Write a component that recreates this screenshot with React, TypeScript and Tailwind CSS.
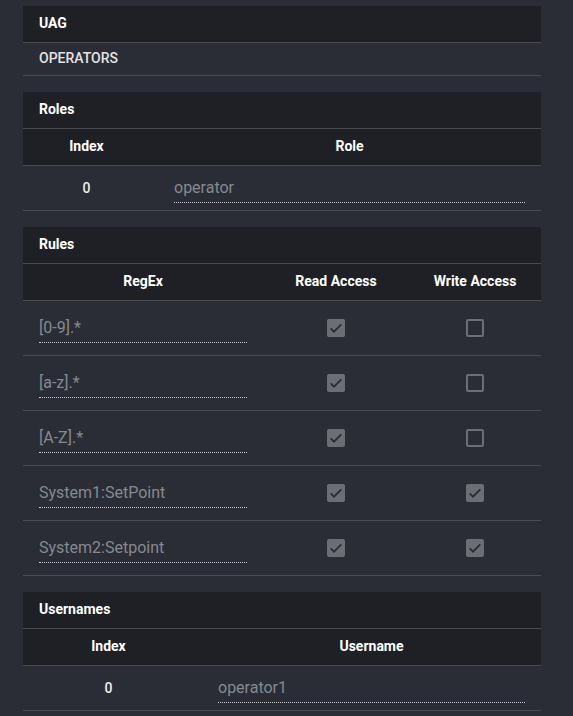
import React from "react";

const font = { fontFamily: "Roboto, 'Noto Sans', sans-serif" };

function Check({ checked }: { checked: boolean }) {
  if (checked) {
    return (
      <div className="w-[18px] h-[18px] rounded-[2px] bg-[#6b6e74] flex items-center justify-center">
        <svg width="16" height="16" viewBox="0 0 24 24">
          <path d="M4 12.5l5 5L20 6.5" fill="none" stroke="#2a2c33" strokeWidth="2.6" />
        </svg>
      </div>
    );
  }
  return <div className="w-[18px] h-[18px] rounded-[2px] border-2 border-[#6b6e74]" />;
}

function Field({ value }: { value: string }) {
  return (
    <div className="w-full h-[29px] border-b border-dotted border-[#c9cacc] text-[16px] leading-[23px] pt-[2px] text-[#86898f]">
      {value}
    </div>
  );
}

function Title({ children }: { children: React.ReactNode }) {
  return (
    <div className="h-[37px] bg-[#1e2025] border-b border-[#4a4b4f] flex items-center px-4 pb-[2px] text-[14px] font-bold text-white">
      {children}
    </div>
  );
}

const rules: [string, boolean, boolean][] = [
  ["[0-9].*", true, false],
  ["[a-z].*", true, false],
  ["[A-Z].*", true, false],
  ["System1:SetPoint", true, true],
  ["System2:Setpoint", true, true],
];

export default function App() {
  return (
    <div className="min-h-[716px] bg-[#2a2d35] pt-[6px]" style={font}>
      <div className="ml-[23px] w-[518px] flex flex-col">
        {/* UAG */}
        <div>
          <Title>UAG</Title>
          <div className="h-[33px] border-b border-[#4a4b4f] flex items-center px-4 pb-[2px] text-[14px] font-medium text-[#e3e3e3]">
            OPERATORS
          </div>
        </div>

        {/* Roles */}
        <div className="mt-4">
          <Title>Roles</Title>
          <div className="grid grid-cols-[127px_1fr] h-[37px] bg-[#1e2025] border-b border-[#4a4b4f] items-center pb-[2px] text-[14px] font-bold text-white">
            <div className="text-center px-4">Index</div>
            <div className="text-center pl-6 pr-4">Role</div>
          </div>
          <div className="grid grid-cols-[127px_1fr] h-[45px] border-b border-[#4a4b4f] items-center">
            <div className="text-center px-4 text-[14px] font-medium text-[#eeeeee]">0</div>
            <div className="pl-6 pr-4">
              <Field value="operator" />
            </div>
          </div>
        </div>

        {/* Rules */}
        <div className="mt-4">
          <Title>Rules</Title>
          <div className="grid grid-cols-[240px_146px_1fr] h-[37px] bg-[#1e2025] border-b border-[#4a4b4f] items-center pb-[2px] text-[14px] font-bold text-white">
            <div className="text-center px-4">RegEx</div>
            <div className="text-center">Read Access</div>
            <div className="text-center">Write Access</div>
          </div>
          {rules.map(([r, read, write]) => (
            <div
              key={r}
              className="grid grid-cols-[240px_146px_1fr] h-[55px] border-b border-[#4a4b4f] items-center"
            >
              <div className="px-4">
                <Field value={r} />
              </div>
              <div className="flex justify-center">
                <Check checked={read} />
              </div>
              <div className="flex justify-center">
                <Check checked={write} />
              </div>
            </div>
          ))}
        </div>

        {/* Usernames */}
        <div className="mt-4">
          <Title>Usernames</Title>
          <div className="grid grid-cols-[171px_1fr] h-[37px] bg-[#1e2025] border-b border-[#4a4b4f] items-center pb-[2px] text-[14px] font-bold text-white">
            <div className="text-center px-4">Index</div>
            <div className="text-center pl-6 pr-4">Username</div>
          </div>
          <div className="grid grid-cols-[171px_1fr] h-[45px] border-b border-[#4a4b4f] items-center">
            <div className="text-center px-4 text-[14px] font-medium text-[#eeeeee]">0</div>
            <div className="pl-6 pr-4">
              <Field value="operator1" />
            </div>
          </div>
        </div>
      </div>
    </div>
  );
}
